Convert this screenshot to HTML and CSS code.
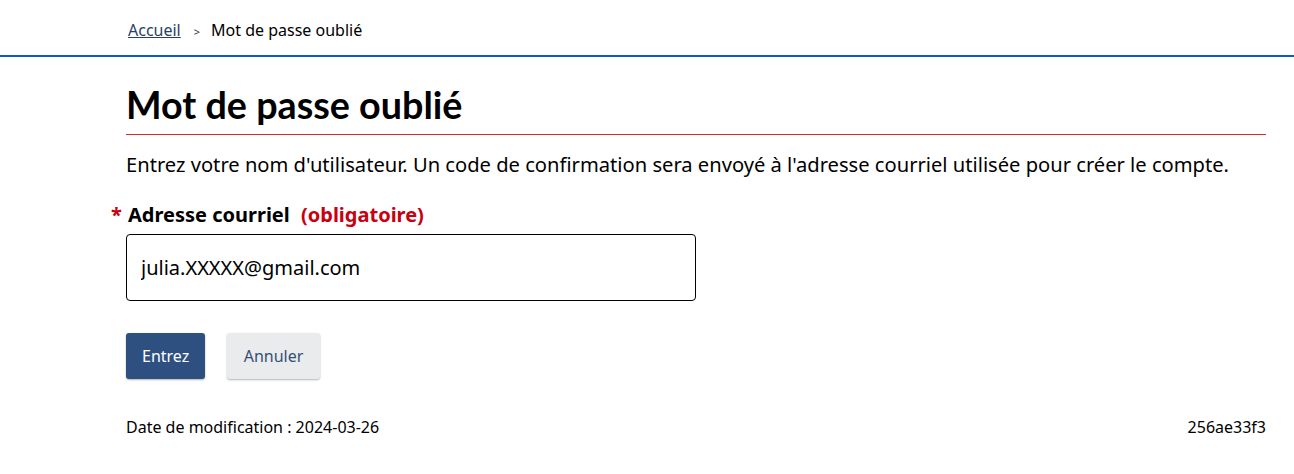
FILE: index.html
```html
<!DOCTYPE html>
<html lang="fr">
<head>
<meta charset="utf-8">
<title>Mot de passe oublié</title>
<link rel="stylesheet" href="styles.css">
</head>
<body>
<nav class="breadcrumb">
  <div class="wrap crumbs">
    <a href="#" class="crumb-link">Accueil</a>
    <span class="sep">&gt;</span>
    <span class="crumb-current">Mot de passe oublié</span>
  </div>
</nav>
<main class="wrap main">
  <h1 class="title">Mot de passe oublié</h1>
  <p class="intro">Entrez votre nom d'utilisateur. Un code de confirmation sera envoyé à l'adresse courriel utilisée pour créer le compte.</p>
  <form class="form">
    <label class="label" for="email"><span class="star">*</span>Adresse courriel <span class="required">(obligatoire)</span></label>
    <input class="input" id="email" type="text" value="julia.XXXXX@gmail.com">
    <div class="actions">
      <button type="button" class="btn btn-primary">Entrez</button>
      <button type="button" class="btn btn-default">Annuler</button>
    </div>
  </form>
  <footer class="meta">
    <span>Date de modification : 2024-03-26</span>
    <span>256ae33f3</span>
  </footer>
</main>
</body>
</html>
```
FILE: styles.css
```css
* { box-sizing: border-box; }
html, body { margin: 0; padding: 0; background: #fff; }
body {
  font-family: "Noto Sans", "Liberation Sans", sans-serif;
  color: #000;
}
.wrap {
  padding-left: 126px;
  padding-right: 28px;
}
.breadcrumb {
  border-bottom: 2px solid #0b57d0;
}
.crumbs {
  display: flex;
  align-items: baseline;
  height: 55px;
  padding-top: 18px;
  font-size: 16px;
  line-height: 24px;
}
.crumb-link {
  color: #284162;
  text-decoration: underline;
  margin-left: 2px;
}
.sep {
  font-size: 11px;
  color: #333;
  margin: 0 11px 0 13px;
}
.crumb-current { color: #000; }

.main { padding-top: 25px; }
.title {
  font-family: Lato, "Liberation Sans", sans-serif;
  font-weight: 700;
  font-size: 37.7px;
  line-height: 46px;
  margin: 0;
  padding-bottom: 6px;
  border-bottom: 1px solid #d12b36;
}
.intro {
  font-size: 20.15px;
  line-height: 30px;
  margin: 14px 0 0;
}
.form { margin-top: 21px; }
.label {
  display: block;
  position: relative;
  font-weight: 700;
  font-size: 20px;
  line-height: 30px;
  padding-left: 2px;
}
.star {
  position: absolute;
  left: -15px;
  top: 0;
  color: #c8000f;
}
.required {
  color: #c8000f;
  margin-left: 6px;
}
.input {
  display: block;
  width: 570px;
  height: 67px;
  margin-top: 4px;
  border: 1px solid #000;
  border-radius: 4px;
  padding: 0 14px;
  font-family: "Noto Sans", "Liberation Sans", sans-serif;
  font-size: 20px;
  color: #000;
}
.actions {
  display: flex;
  gap: 22px;
  margin-top: 32px;
}
.btn {
  font-family: "Noto Sans", "Liberation Sans", sans-serif;
  font-size: 16px;
  height: 46px;
  border: none;
  border-radius: 3px;
  box-shadow: 0 1px 2px rgba(0,0,0,0.3);
  padding: 0 16px;
}
.btn-primary {
  background: #2e5080;
  color: #fff;
  width: 79px;
}
.btn-default {
  background: #eaebed;
  color: #335075;
  width: 93px;
}
.meta {
  display: flex;
  justify-content: space-between;
  margin-top: 36px;
  font-size: 16px;
  line-height: 24px;
}
```
